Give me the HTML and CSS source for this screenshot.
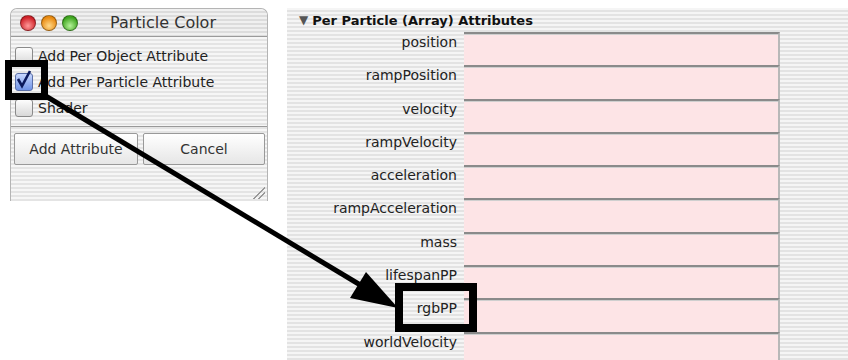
FILE: index.html
```html
<!DOCTYPE html>
<html lang="en">
<head>
    <meta charset="UTF-8">
    <title>Particle Color</title>
    <link rel="stylesheet" href="styles.css">
</head>
<body>
    <div class="page">
        <div class="window">
            <div class="titlebar">
                <span class="light red"></span>
                <span class="light orange"></span>
                <span class="light green"></span>
                <span class="title">Particle Color</span>
            </div>
            <div class="options">
                <label class="option"><span class="box"></span>Add Per Object Attribute</label>
                <label class="option"><span class="box checked"><svg width="18" height="20" viewBox="0 0 18 20"><path d="M3 9 L7 16 L15 1" fill="none" stroke="#0b1a5c" stroke-width="2.6"/></svg></span>Add Per Particle Attribute</label>
                <label class="option"><span class="box"></span>Shader</label>
            </div>
            <div class="buttons">
                <button class="btn add">Add Attribute</button>
                <button class="btn cancel">Cancel</button>
            </div>
            <div class="grip"></div>
        </div>

        <div class="panel">
            <div class="header"><span class="arrow">&#9660;</span>Per Particle (Array) Attributes</div>
            <div class="attrs">
                <div class="name">position</div><div class="field"></div>
                <div class="name">rampPosition</div><div class="field"></div>
                <div class="name">velocity</div><div class="field"></div>
                <div class="name">rampVelocity</div><div class="field"></div>
                <div class="name">acceleration</div><div class="field"></div>
                <div class="name">rampAcceleration</div><div class="field"></div>
                <div class="name">mass</div><div class="field"></div>
                <div class="name">lifespanPP</div><div class="field"></div>
                <div class="name">rgbPP</div><div class="field"></div>
                <div class="name">worldVelocity</div><div class="field"></div>
            </div>
        </div>
    </div>

    <!-- annotation drawn over the screenshot -->
    <svg class="notes" width="848" height="360" viewBox="0 0 848 360">
        <rect x="8.5" y="63.5" width="36" height="33" fill="none" stroke="#000" stroke-width="7"/>
        <line x1="44" y1="95" x2="362" y2="286" stroke="#000" stroke-width="5"/>
        <polygon points="398,308 350,298 366,272" fill="#000"/>
        <rect x="399" y="287" width="74" height="41" fill="none" stroke="#000" stroke-width="8"/>
    </svg>
</body>
</html>
```

FILE: styles.css
```css
body {
    margin: 0;
    background: #fff;
    font-family: "DejaVu Sans", "Liberation Sans", sans-serif;
    color: #222;
    width: 848px;
    height: 360px;
    overflow: hidden;
}
.page {
    display: flex;
    align-items: flex-start;
    padding-top: 8px;
    height: 352px;
}
.window {
    position: relative;
    margin-left: 10px;
    width: 256px;
    height: 192px;
    border: 1px solid #b4b4b4;
    border-bottom: none;
    border-radius: 7px 7px 0 0;
    background: repeating-linear-gradient(#f6f6f6 0 2px, #e4e4e4 2px 4px);
    display: flex;
    flex-direction: column;
}
.titlebar {
    height: 27px;
    border-bottom: 1px solid #9a9a9a;
    display: flex;
    align-items: center;
    padding-left: 9px;
    gap: 5px;
    background: repeating-linear-gradient(#f0f0f0 0 2px, #dcdcdc 2px 4px);
    border-radius: 7px 7px 0 0;
}
.light {
    width: 14px;
    height: 14px;
    border-radius: 50%;
    border: 1px solid rgba(0, 0, 0, 0.35);
}
.red { background: radial-gradient(circle at 50% 70%, #ff9a9a, #d1232a 70%); }
.orange { background: radial-gradient(circle at 50% 70%, #ffd98a, #e98a10 70%); }
.green { background: radial-gradient(circle at 50% 70%, #b6f29a, #3fa61f 70%); }
.title {
    margin-left: 27px;
    font-size: 16px;
    color: #333;
}
.options {
    padding: 6px 0 0 4px;
    height: 78px;
}
.option {
    display: flex;
    align-items: center;
    height: 26px;
    font-size: 14px;
    color: #222;
}
.box {
    position: relative;
    width: 16px;
    height: 16px;
    margin-right: 5px;
    border: 1px solid #8a8a8a;
    border-radius: 3px;
    background: linear-gradient(#fdfdfd, #d8d8d8);
}
.box svg {
    position: absolute;
    left: -1px;
    top: -4px;
}
.box.checked {
    background: linear-gradient(#c8d8ff, #6f93e6);
    border-color: #5a6fa8;
}
.buttons {
    border-top: 1px solid #999;
    margin-top: 5px;
    padding: 6px 0 0 3px;
    display: flex;
    gap: 5px;
}
.btn {
    height: 32px;
    border: 1px solid #999;
    border-radius: 2px;
    background: linear-gradient(#ffffff, #e6e6e6);
    font-family: "DejaVu Sans", sans-serif;
    font-size: 14px;
    color: #333;
    padding: 0;
}
.add { width: 124px; }
.cancel { width: 122px; }
.grip {
    position: absolute;
    right: 2px;
    bottom: 2px;
    width: 14px;
    height: 14px;
    background: linear-gradient(135deg, transparent 55%, #999 55% 62%, transparent 62% 75%, #999 75% 82%, transparent 82%);
}
.panel {
    margin-left: 19px;
    flex: 1;
    height: 352px;
    background: repeating-linear-gradient(#f5f5f5 0 2px, #e3e3e3 2px 4px);
}
.header {
    height: 24px;
    padding-left: 12px;
    font-size: 13px;
    font-weight: bold;
    color: #111;
    display: flex;
    align-items: center;
}
.arrow {
    font-size: 12px;
    color: #555;
    margin-right: 4px;
}
.attrs {
    display: grid;
    grid-template-columns: 177px 316px;
    grid-auto-rows: 33.3px;
}
.name {
    text-align: right;
    padding: 2px 7px 0 0;
    font-size: 14px;
    color: #222;
}
.field {
    background: #fde4e6;
    border-top: 2px solid #8a8a8a;
    border-right: 2px solid #b8b8b8;
    box-shadow: inset 0 1px 0 #cfcfcf;
}
.notes {
    position: absolute;
    left: 0;
    top: 0;
}
```
